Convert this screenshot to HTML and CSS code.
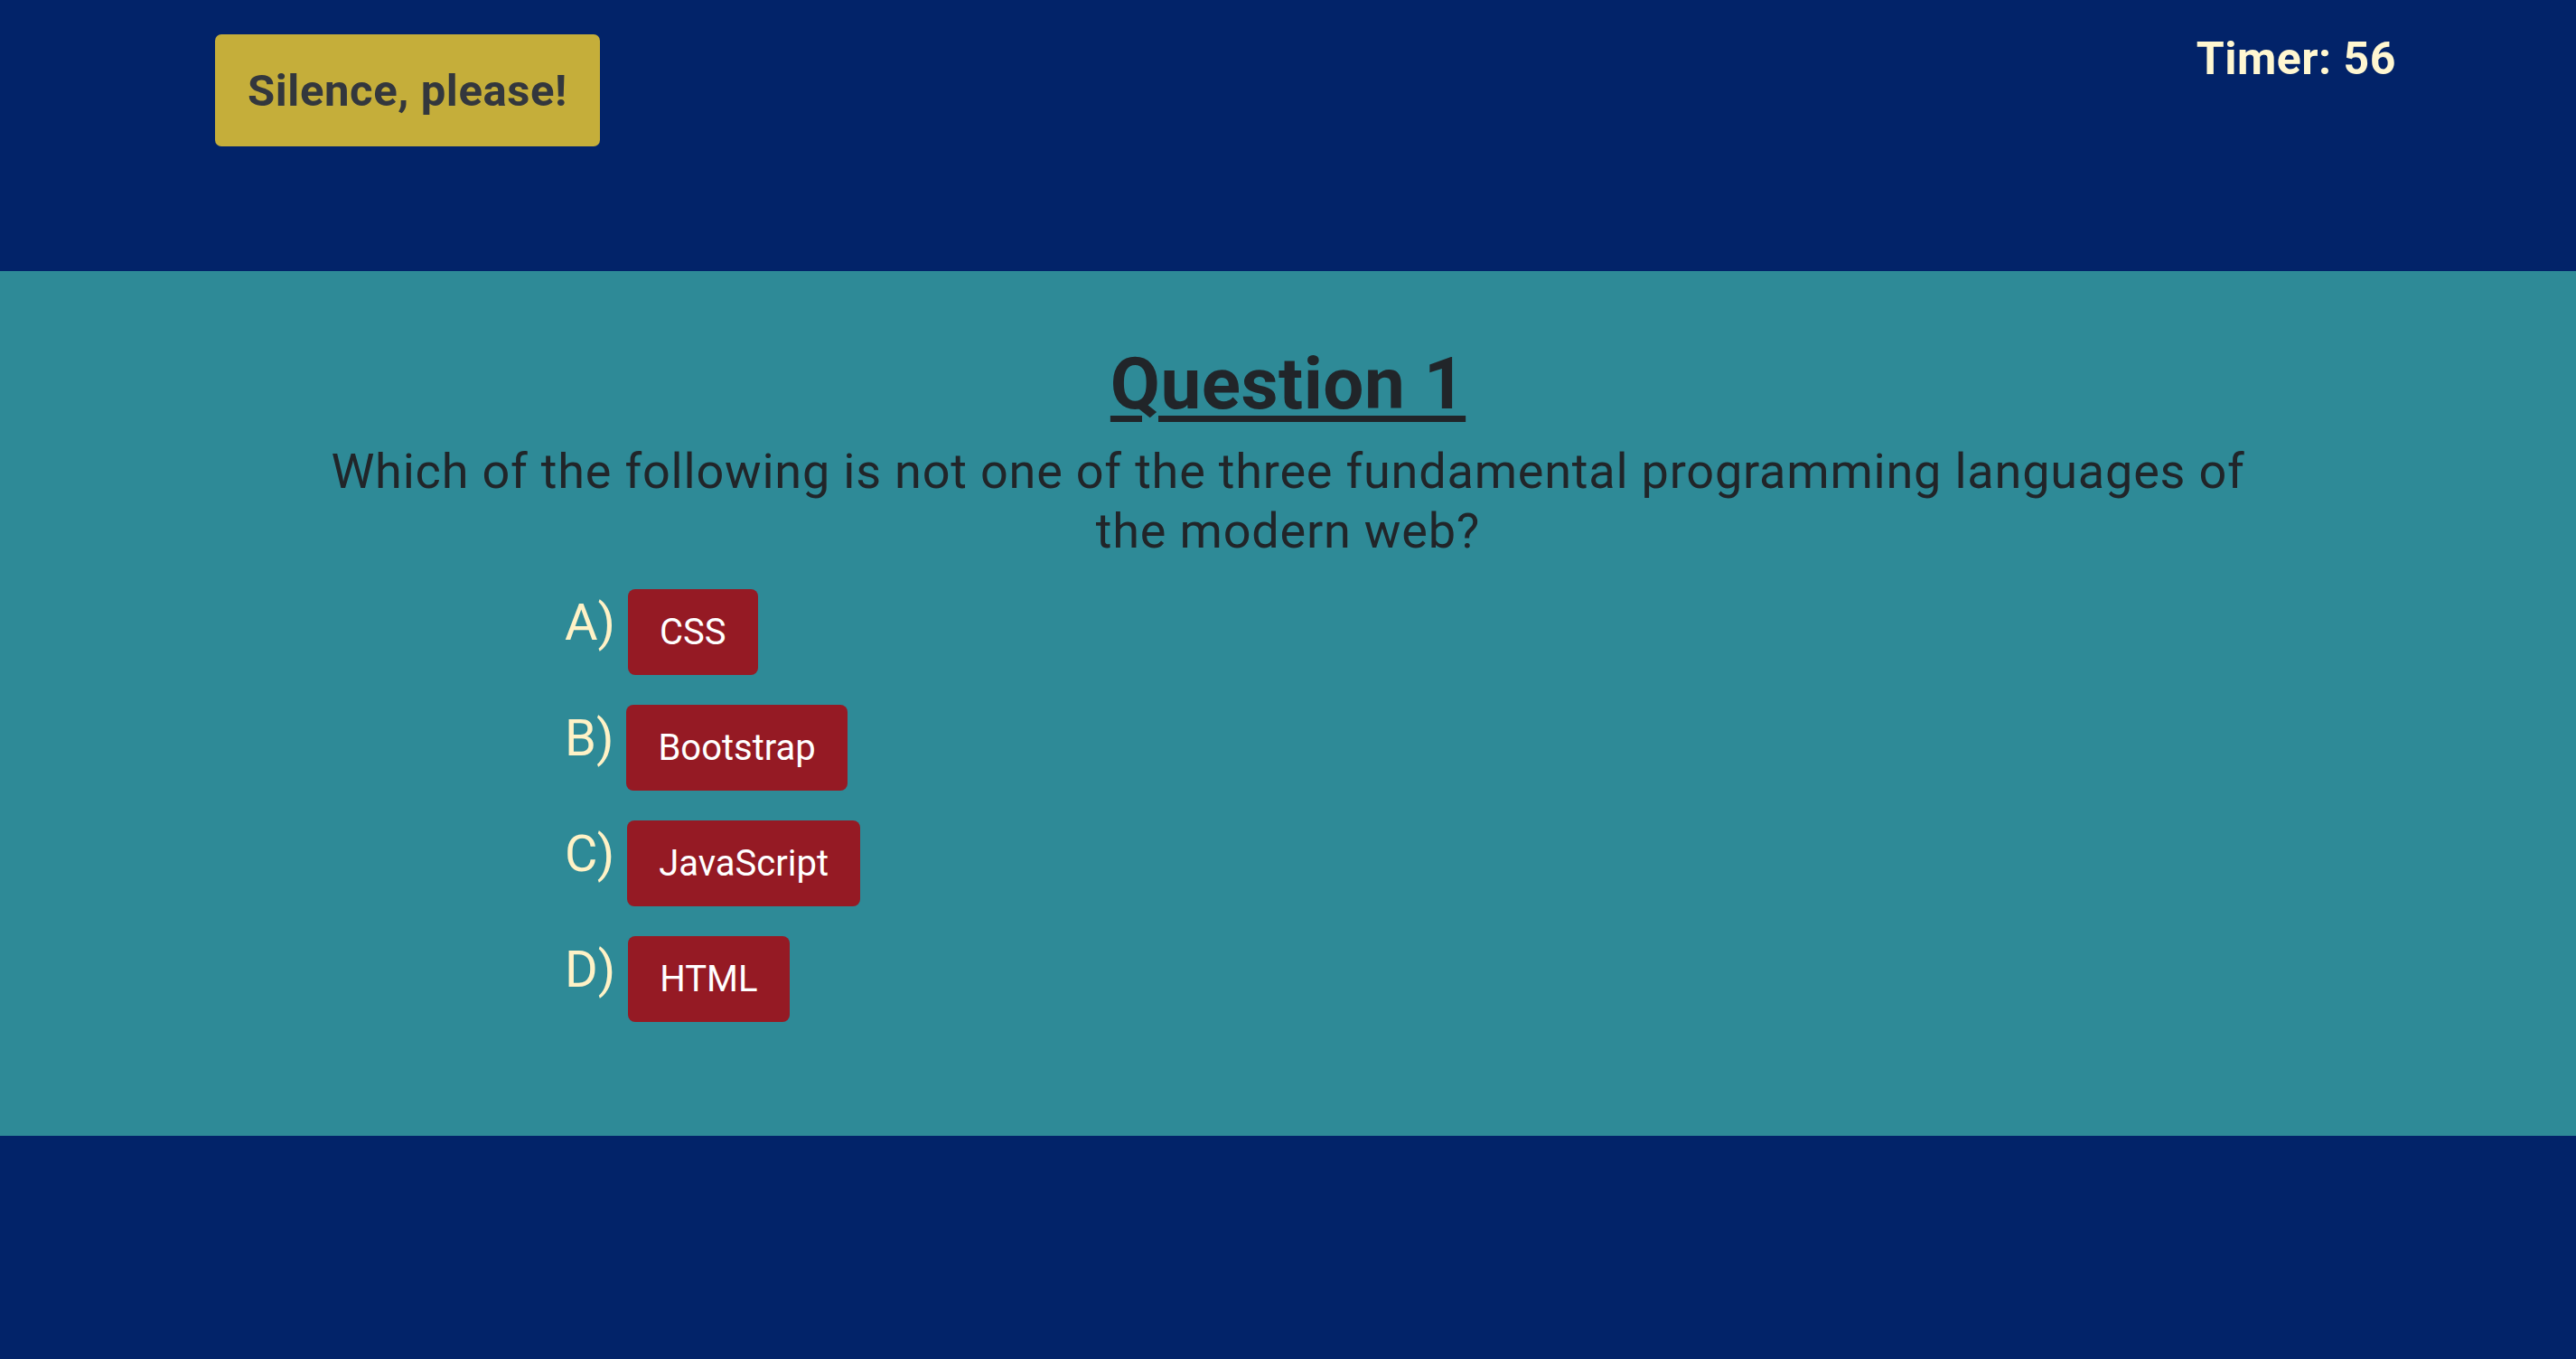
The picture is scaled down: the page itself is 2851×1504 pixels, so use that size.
FILE: index.html
```html
<!DOCTYPE html>
<html lang="en">
<head>
<meta charset="utf-8">
<title>Quiz</title>
<link rel="stylesheet" href="styles.css">
</head>
<body>
<header class="topbar">
  <button class="silence">Silence, please!</button>
  <div class="timer">Timer: 56</div>
</header>
<main class="quiz">
  <h1 class="q-title">Question 1</h1>
  <p class="q-text">Which of the following is not one of the three fundamental programming languages of the modern web?</p>
  <ol class="answers">
    <li class="answer"><span class="label">A)</span><button class="choice">CSS</button></li>
    <li class="answer"><span class="label">B)</span><button class="choice">Bootstrap</button></li>
    <li class="answer"><span class="label">C)</span><button class="choice">JavaScript</button></li>
    <li class="answer"><span class="label">D)</span><button class="choice">HTML</button></li>
  </ol>
</main>
<footer class="bottom"></footer>
</body>
</html>
```
FILE: styles.css
```css
* { box-sizing: border-box; }
html, body { margin: 0; padding: 0; }
body {
  font-family: Roboto, "Liberation Sans", sans-serif;
  background: #022369;
  color: #212529;
  height: 1504px;
  overflow: hidden;
}
.topbar {
  height: 300px;
  background: #022369;
  display: flex;
  justify-content: space-between;
  align-items: flex-start;
  padding: 38px 199px 0 238px;
}
.silence {
  font-family: inherit;
  font-weight: 700;
  font-size: 49px;
  letter-spacing: 0.6px;
  line-height: 1;
  height: 124px;
  padding: 0 36px;
  background: #c5ae3a;
  color: #33373d;
  border: none;
  border-radius: 7px;
}
.timer {
  margin-top: 2px;
  font-size: 50px;
  line-height: 1;
  font-weight: 700;
  letter-spacing: 0.5px;
  color: #fff7d1;
}
.quiz {
  height: 957px;
  background: #2e8a97;
  padding-top: 85px;
}
.q-title {
  margin: 0;
  text-align: center;
  font-size: 80px;
  line-height: 1;
  font-weight: 700;
  letter-spacing: 0.5px;
  text-decoration: underline;
  text-decoration-thickness: 7px;
  text-underline-offset: 8px;
  color: #212529;
}
.q-text {
  margin: 24px auto 0;
  width: 2180px;
  text-align: center;
  font-size: 54px;
  letter-spacing: 0.8px;
  line-height: 66px;
  color: #212529;
}
.answers {
  list-style: none;
  margin: 31px 0 0 625px;
  padding: 0;
  display: flex;
  flex-direction: column;
  gap: 33px;
}
.answer {
  display: flex;
  align-items: flex-start;
  gap: 14px;
}
.label {
  margin-top: 9px;
  font-size: 56px;
  line-height: 1;
  color: #fff2c6;
}
.choice {
  font-family: inherit;
  font-size: 40px;
  line-height: 60px;
  padding: 17.5px 35px;
  background: #951a24;
  color: #ffffff;
  border: none;
  border-radius: 8px;
}
.bottom {
  height: 247px;
  background: #022369;
}
```
